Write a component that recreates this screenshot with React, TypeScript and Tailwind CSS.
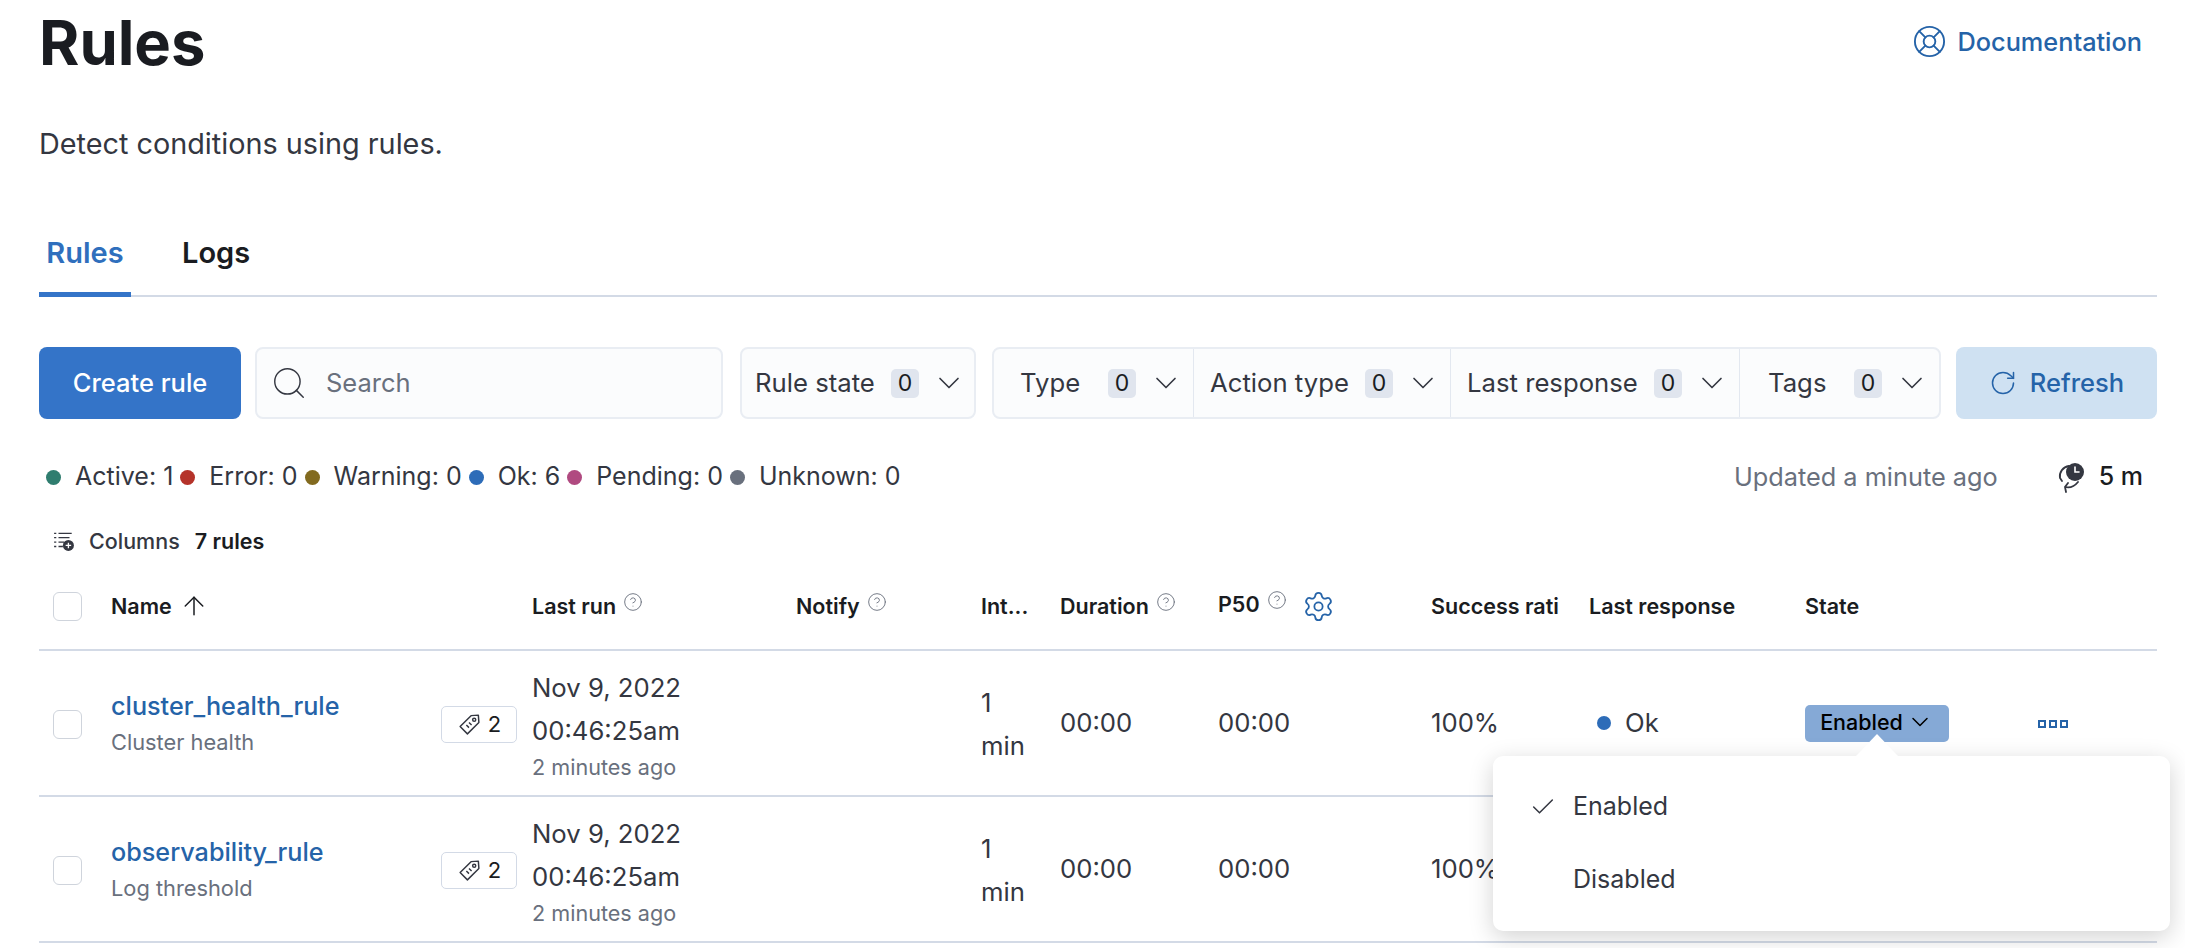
import { ChevronDown, Check, LifeBuoy, RotateCw, Settings, ArrowUp, CircleHelp, Search } from "lucide-react";

const counts = [
  { label: "Active: 1", dot: "bg-[#2f7d6f]" },
  { label: "Error: 0", dot: "bg-[#b5332a]" },
  { label: "Warning: 0", dot: "bg-[#826a1f]" },
  { label: "Ok: 6", dot: "bg-[#2d6cb8]" },
  { label: "Pending: 0", dot: "bg-[#b04a80]" },
  { label: "Unknown: 0", dot: "bg-[#69707d]" },
];

const rules = [
  { name: "cluster_health_rule", type: "Cluster health" },
  { name: "observability_rule", type: "Log threshold" },
];

const FilterButton = ({ label, className }: { label: string; className: string }) => (
  <div className={`flex h-full items-center justify-between ${className}`}>
    <span className="text-[25.7px] text-[#343741]">{label}</span>
    <span className="ml-auto flex h-[29px] w-[28px] items-center justify-center rounded-[5px] bg-[#e0e5ee] text-[23px] text-[#1a1c21]">0</span>
    <ChevronDown className="ml-[12px] size-[36px] text-[#343741]" strokeWidth={1.1} />
  </div>
);

const HelpIcon = () => <CircleHelp className="mb-[8px] ml-[7px] size-[20px] text-[#69707d]" strokeWidth={1.1} />;

const HeaderCell = ({ label, help, className }: { label: string; help?: boolean; className: string }) => (
  <div className={`flex items-center whitespace-nowrap overflow-hidden text-[21.5px] font-semibold text-[#1a1c21] ${className}`}>
    {label}
    {help && <HelpIcon />}
  </div>
);

const TagIcon = () => (
  <svg viewBox="0 0 24 24" className="size-[25px] text-[#343741]" fill="none" stroke="currentColor" strokeWidth="1.4" strokeLinejoin="round">
    <path d="M13.5 3.5 20.5 3 21 10 10 21 3 14Z" />
    <circle cx="16.5" cy="7.5" r="1.5" />
    <path d="M9 12.5 11.5 15M11.5 10 14 12.5" />
  </svg>
);

const Row = ({ name, type, showState }: { name: string; type: string; showState: boolean }) => (
  <div className="flex h-[146px] items-center border-b-[2px] border-[#d3dae6]">
    <div className="mt-[2px] w-[72px] shrink-0 pl-[14px]">
      <div className="h-[29px] w-[29px] rounded-[6px] border border-[#cfd4dc] bg-white" />
    </div>
    <div className="flex w-[330px] shrink-0 flex-col pt-[1px]">
      <span className="text-[25.2px] font-medium leading-[36px] text-[#2563a8]">{name}</span>
      <span className="text-[21.8px] leading-[36px] text-[#69707d]">{type}</span>
    </div>
    <div className="mt-[3px] flex h-[37px] w-[76px] shrink-0 items-center justify-center gap-[6px] rounded-[5px] border border-[#d3dae6] text-[22px] text-[#1a1c21]">
      <TagIcon />
      2
    </div>
    <div className="ml-[15px] flex w-[264px] shrink-0 flex-col pt-[3px] text-[25.7px] leading-[43px] text-[#343741]">
      <span>Nov 9, 2022</span>
      <span>00:46:25am</span>
      <span className="text-[21.6px] leading-[31px] text-[#69707d]">2 minutes ago</span>
    </div>
    <div className="w-[185px] shrink-0" />
    <div className="w-[79px] shrink-0 pt-[2px] text-[25.7px] leading-[43px] text-[#343741]">
      1<br />min
    </div>
    <div className="w-[158px] shrink-0 pt-[1px] text-[25.7px] text-[#343741]">00:00</div>
    <div className="w-[213px] shrink-0 pt-[1px] text-[25.7px] text-[#343741]">00:00</div>
    <div className="w-[158px] shrink-0 pt-[1px] text-[25.7px] text-[#343741]">100%</div>
    {showState && (
      <>
        <div className="flex w-[216px] shrink-0 items-center gap-[14px] pl-[8px] pt-[1px] text-[25.7px] text-[#343741]">
          <span className="size-[14px] rounded-full bg-[#2d6cb8]" />
          Ok
        </div>
        <div className="flex h-[37px] w-[144px] shrink-0 items-center justify-center gap-[3px] rounded-[5px] bg-[#85a9d6] pb-[2px] text-[21.5px] font-medium text-black">
          Enabled
          <ChevronDown className="size-[28px]" strokeWidth={1.3} />
        </div>
        <div className="ml-[89px] flex gap-[3px] pt-[2px]">
          <span className="size-[8px] border-[2px] border-[#2563a8]" />
          <span className="size-[8px] border-[2px] border-[#2563a8]" />
          <span className="size-[8px] border-[2px] border-[#2563a8]" />
        </div>
      </>
    )}
  </div>
);

export default function App() {
  return (
    <div className="relative h-[948px] w-[2185px] overflow-hidden bg-white pl-[39px] pr-[28px] font-['Inter',sans-serif]">
      <div className="flex items-start justify-between">
        <h1 className="mt-[8px] text-[61.5px] font-bold leading-[70px] text-[#1a1c21]">Rules</h1>
        <a className="mr-[15px] mt-[23px] flex items-center gap-[11px] text-[25.3px] font-medium text-[#2563a8]">
          <LifeBuoy className="size-[35px]" strokeWidth={1.3} />
          Documentation
        </a>
      </div>
      <p className="mt-[48px] text-[28.8px] leading-[36px] text-[#343741]">Detect conditions using rules.</p>

      <div className="mt-[58px] flex h-[77px] gap-[8px] border-b-[2px] border-[#d3dae6]">
        <div className="-mb-[2px] flex w-[92px] items-center justify-center border-b-[5px] border-[#3474c8] pb-[7px] text-[29px] font-semibold text-[#2f6fbd]">Rules</div>
        <div className="ml-[43px] flex items-center pb-[9px] text-[29px] font-semibold text-[#1a1c21]">Logs</div>
      </div>

      <div className="mt-[50px] flex h-[72px] items-stretch">
        <div className="flex w-[202px] items-center justify-center rounded-[8px] bg-[#3474c8] text-[25.5px] font-medium text-white">Create rule</div>
        <div className="ml-[14px] flex w-[468px] items-center rounded-[8px] border-[2px] border-[#e9edf3] bg-[#fbfcfd] pl-[13px] text-[25.5px] text-[#69707d]">
          <Search className="size-[38px] text-[#343741]" strokeWidth={0.9} />
          <span className="ml-[18px]">Search</span>
        </div>
        <div className="ml-[17px] w-[236px] rounded-[8px] border-[2px] border-[#e9edf3] bg-[#fbfcfd]">
          <FilterButton label="Rule state" className="pl-[13px] pr-[7px]" />
        </div>
        <div className="ml-[16px] flex w-[949px] rounded-[8px] border-[2px] border-[#e9edf3] bg-[#fbfcfd]">
          <FilterButton label="Type" className="w-[200px] border-r border-[#e3e8f0] pl-[26px] pr-[9px]" />
          <FilterButton label="Action type" className="w-[257px] border-r border-[#e3e8f0] pl-[16px] pr-[9px]" />
          <FilterButton label="Last response" className="w-[289px] border-r border-[#e3e8f0] pl-[16px] pr-[9px]" />
          <FilterButton label="Tags" className="flex-1 pl-[28px] pr-[9px]" />
        </div>
        <div className="ml-[15px] flex w-[201px] items-center justify-center gap-[13px] rounded-[8px] bg-[#cfe1f2] text-[25.5px] font-medium text-[#2563a8]">
          <RotateCw className="size-[28px]" strokeWidth={1.3} />
          Refresh
        </div>
      </div>

      <div className="mt-[42px] flex h-[32px] items-center text-[25px] text-[#343741]">
        {counts.map(c => (
          <div key={c.label} className="flex items-center">
            <span className={`mx-[7px] size-[15px] rounded-full ${c.dot}`} />
            <span className="ml-[7px]">{c.label}</span>
          </div>
        ))}
        <span className="ml-auto text-[25.3px] text-[#69707d]">Updated a minute ago</span>
        <svg viewBox="0 0 32 32" className="ml-[58px] size-[32px] text-[#343741]" fill="none" stroke="currentColor" strokeWidth="1.8" strokeLinecap="round">
          <path d="M13 5C7 6 3 11 4 17l2 3" />
          <path d="M22 21c-4 5-9 6-13 5M12 22l-3 4 1 5" />
          <circle cx="19" cy="11" r="9" fill="currentColor" stroke="none" />
          <path d="M19 6v5h4" stroke="#fff" strokeWidth="1.6" />
        </svg>
        <span className="ml-[11px] mr-[14px] text-[25px] font-medium text-[#1a1c21]">5 m</span>
      </div>

      <div className="mt-[34px] flex h-[28px] items-center pl-[14px] text-[21.5px] font-medium text-[#343741]">
        <svg viewBox="0 0 20 20" className="size-[22px]" fill="none" stroke="currentColor" strokeWidth="1.2">
          <path d="M1 3h2M1 7h2M1 11h2M1 15h2M5 3h12M5 7h10M5 11h5M5 15h4" />
          <circle cx="14" cy="14" r="5" fill="currentColor" stroke="none" />
          <path d="M14 11.5v5M11.5 14h5" stroke="#fff" />
        </svg>
        <span className="ml-[14px]">Columns</span>
        <span className="ml-[15px] font-semibold text-[#1a1c21]">7 rules</span>
      </div>

      <div className="mt-[24px] flex h-[72px] items-center border-b-[2px] border-[#d3dae6] pb-[16px]">
        <div className="w-[72px] shrink-0 pl-[14px]">
          <div className="h-[29px] w-[29px] rounded-[6px] border border-[#cfd4dc] bg-white" />
        </div>
        <div className="flex w-[421px] shrink-0 items-center text-[21.5px] font-semibold text-[#1a1c21]">
          Name
          <ArrowUp className="ml-[7px] size-[30px]" strokeWidth={1.2} />
        </div>
        <HeaderCell label="Last run" help className="w-[264px] shrink-0" />
        <HeaderCell label="Notify" help className="w-[185px] shrink-0" />
        <HeaderCell label="Int..." className="w-[79px] shrink-0" />
        <HeaderCell label="Duration" help className="w-[158px] shrink-0" />
        <div className="flex w-[213px] shrink-0 items-center">
          <HeaderCell label="P50" help className="pb-[4px]" />
          <Settings className="ml-[15px] size-[33px] text-[#2563a8]" strokeWidth={1.3} />
        </div>
        <HeaderCell label="Success rati" className="w-[158px] shrink-0" />
        <HeaderCell label="Last response" className="w-[216px] shrink-0" />
        <HeaderCell label="State" className="w-[100px] shrink-0" />
      </div>

      {rules.map((r, i) => (
        <Row key={r.name} name={r.name} type={r.type} showState={i === 0} />
      ))}

      <div className="absolute left-[1493px] top-[756px] z-10 h-[175px] w-[677px] rounded-[10px] bg-white py-[26px] text-[25px] text-[#343741] shadow-[0_6px_24px_rgba(0,0,0,0.18)]">
        <div className="absolute left-[363px] top-[-22px] h-0 w-0 border-x-[21px] border-b-[22px] border-x-transparent border-b-white" />
        <div className="flex h-[50px] items-center">
          <Check className="ml-[36px] size-[28px]" strokeWidth={1.3} />
          <span className="ml-[16px]">Enabled</span>
        </div>
        <div className="mt-[23px] flex h-[50px] items-center pl-[80px]">Disabled</div>
      </div>
    </div>
  );
}
